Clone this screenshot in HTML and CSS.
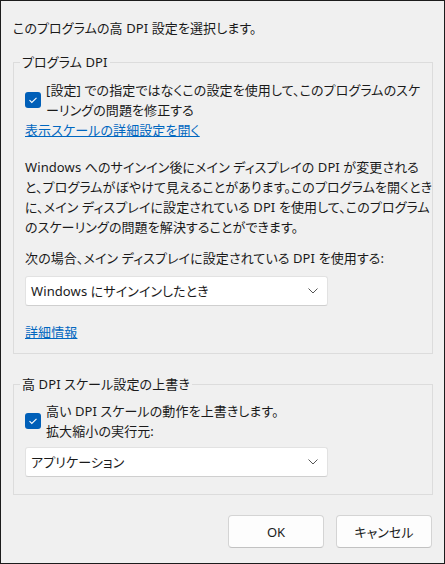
FILE: index.html
```html
<!DOCTYPE html>
<html lang="ja">
<head>
    <meta charset="UTF-8">
    <meta name="viewport" content="width=device-width, initial-scale=1.0">
    <title>高 DPI 設定</title>
    <link rel="stylesheet" href="styles.css">
</head>
<body>
    <div class="dialog">
        <p class="intro">このプログラムの高 DPI 設定を選択します。</p>

        <fieldset class="group first">
            <legend>プログラム DPI</legend>
            <label class="check">
                <span class="box">
                    <svg width="16" height="16" viewBox="0 0 16 16"><path d="M4.5 8.2 L6.8 10.4 L11.5 5.8" fill="none" stroke="#fff" stroke-width="1.1"/></svg>
                </span>
                <span>[設定] での指定ではなくこの設定を使用して、このプログラムのスケ<br>ーリングの問題を修正する</span>
            </label>
            <a href="#" class="link">表示スケールの詳細設定を開く</a>

            <p class="desc">Windows へのサインイン後にメイン ディスプレイの DPI が変更される<br>と、プログラムがぼやけて見えることがあります。このプログラムを開くとき<br>に、メイン ディスプレイに設定されている DPI を使用して、このプログラム<br>のスケーリングの問題を解決することができます。</p>

            <p class="field-label">次の場合、メイン ディスプレイに設定されている DPI を使用する:</p>
            <div class="select">
                <span>Windows にサインインしたとき</span>
                <svg width="10" height="6" viewBox="0 0 10 6"><path d="M0.5 0.5 L5 5 L9.5 0.5" fill="none" stroke="#555" stroke-width="1"/></svg>
            </div>

            <a href="#" class="link more">詳細情報</a>
        </fieldset>

        <fieldset class="group second">
            <legend>高 DPI スケール設定の上書き</legend>
            <label class="check">
                <span class="box">
                    <svg width="16" height="16" viewBox="0 0 16 16"><path d="M4.5 8.2 L6.8 10.4 L11.5 5.8" fill="none" stroke="#fff" stroke-width="1.1"/></svg>
                </span>
                <span>高い DPI スケールの動作を上書きします。<br>拡大縮小の実行元:</span>
            </label>
            <div class="select small-gap">
                <span>アプリケーション</span>
                <svg width="10" height="6" viewBox="0 0 10 6"><path d="M0.5 0.5 L5 5 L9.5 0.5" fill="none" stroke="#555" stroke-width="1"/></svg>
            </div>
        </fieldset>

        <div class="buttons">
            <button class="btn">OK</button>
            <button class="btn">キャンセル</button>
        </div>
    </div>
</body>
</html>
```

FILE: styles.css
```css
html, body {
    margin: 0;
    padding: 0;
    background: #f0f0f0;
}

body {
    font-family: "Noto Sans", "Noto Sans CJK JP", sans-serif;
    font-size: 13px;
    line-height: 20px;
    color: #1a1a1a;
    font-feature-settings: "palt";
    letter-spacing: 0.1px;
}

.dialog {
    width: 445px;
    height: 564px;
    box-sizing: border-box;
    border: 1px solid #1c1c1c;
    padding: 17px 11px 0 12px;
    background: #f0f0f0;
}

p {
    margin: 0;
}

.group {
    margin: 14px 0 0 0;
    padding: 8px 11px 11px 11px;
    border: 1px solid #dcdcdc;
    min-width: 0;
}

.group legend {
    margin-left: -5px;
    padding: 0 2px;
}

.second {
    margin-top: 20px;
    padding-top: 7px;
    padding-bottom: 17px;
}

.check {
    display: flex;
    align-items: center;
    gap: 5px;
    white-space: nowrap;
}

.box {
    width: 16px;
    height: 16px;
    flex: none;
    background: #005fb8;
    border-radius: 3px;
    display: flex;
}

.link {
    display: inline-block;
    color: #0067c0;
    text-decoration: underline;
}

.desc {
    margin-top: 17px;
    white-space: nowrap;
}

.field-label {
    margin-top: 11px;
    white-space: nowrap;
}

.select {
    margin-top: 8px;
    width: 303px;
    height: 30px;
    box-sizing: border-box;
    background: #fff;
    border: 1px solid #e2e2e2;
    border-bottom-color: #cfcfcf;
    border-radius: 3px;
    display: flex;
    align-items: center;
    justify-content: space-between;
    padding: 0 9px 0 5px;
}

.small-gap {
    margin-top: 6px;
}

.more {
    margin-top: 16px;
}

.buttons {
    display: flex;
    justify-content: flex-end;
    gap: 12px;
    margin-top: 20px;
    padding-right: 1px;
}

.btn {
    width: 96px;
    height: 33px;
    background: #fdfdfd;
    border: 1px solid #d4d4d4;
    border-bottom-color: #c2c2c2;
    border-radius: 4px;
    font: inherit;
    color: #1a1a1a;
    padding: 0;
}
```
